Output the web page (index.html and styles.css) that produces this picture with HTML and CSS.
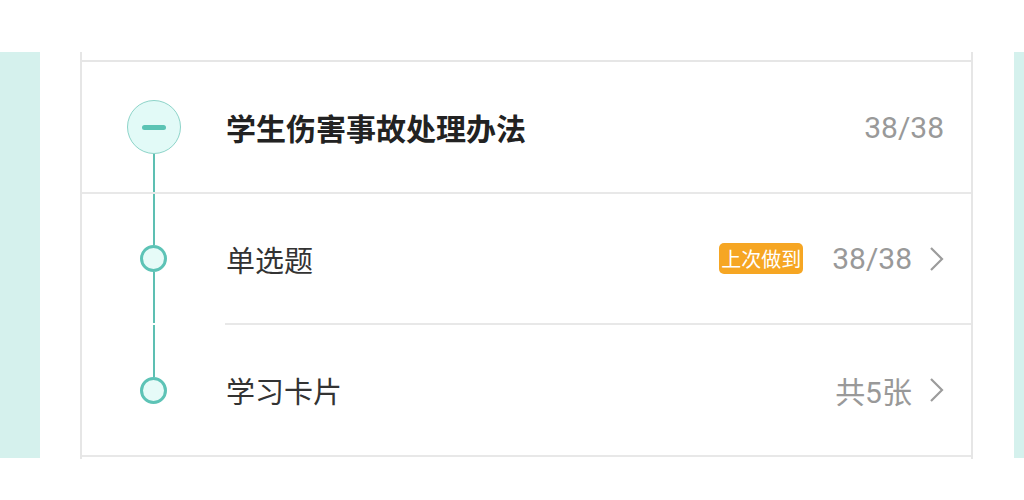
FILE: index.html
```html
<!DOCTYPE html>
<html lang="zh-CN">
<head>
<meta charset="utf-8">
<title>学生伤害事故处理办法</title>
<link rel="stylesheet" href="styles.css">
</head>
<body>
<div class="page">
  <div class="side side-left"></div>
  <div class="card">
    <div class="card-top"></div>
    <div class="row head">
      <div class="node">
        <div class="seg seg-empty"></div>
        <div class="big-dot"><span class="minus"></span></div>
        <div class="seg"></div>
      </div>
      <div class="content">
        <div class="title">学生伤害事故处理办法</div>
        <div class="meta"><span class="num">38/38</span></div>
      </div>
    </div>
    <div class="divider"></div>
    <div class="row item item-first">
      <div class="node">
        <div class="seg"></div>
        <div class="dot"></div>
        <div class="seg"></div>
      </div>
      <div class="content">
        <div class="label">单选题</div>
        <div class="meta">
          <span class="badge">上次做到</span>
          <span class="num num-mid">38/38</span>
          <svg class="chev" viewBox="0 0 15 26" width="15" height="26"><path d="M2 2 L13 13 L2 24" fill="none" stroke="#9c9c9c" stroke-width="2.2"/></svg>
        </div>
      </div>
    </div>
    <div class="divider divider-inset"></div>
    <div class="row item">
      <div class="node">
        <div class="seg"></div>
        <div class="dot"></div>
        <div class="seg seg-empty"></div>
      </div>
      <div class="content">
        <div class="label">学习卡片</div>
        <div class="meta">
          <span class="num">共5张</span>
          <svg class="chev" viewBox="0 0 15 26" width="15" height="26"><path d="M2 2 L13 13 L2 24" fill="none" stroke="#9c9c9c" stroke-width="2.2"/></svg>
        </div>
      </div>
    </div>
    <div class="divider"></div>
  </div>
  <div class="side side-right"></div>
</div>
</body>
</html>
```
FILE: styles.css
```css
html, body {
  margin: 0;
  padding: 0;
  background: #ffffff;
}
body {
  font-family: "Noto Sans CJK SC", sans-serif;
  width: 1024px;
  height: 500px;
  overflow: hidden;
}
.page {
  display: flex;
  margin-top: 52px;
  height: 407px;
}
.side {
  background: #d5f1ed;
  height: 406px;
}
.side-left {
  width: 40px;
  margin-right: 40px;
}
.side-right {
  width: 10px;
  margin-left: 41px;
}
.card {
  width: 889px;
  border-left: 2px solid #e6e6e6;
  border-right: 2px solid #e6e6e6;
  display: flex;
  flex-direction: column;
}
.card-top {
  height: 8px;
  border-bottom: 2px solid #e6e6e6;
}
.divider {
  height: 2px;
  background: #e8e8e8;
}
.divider-inset {
  margin-left: 143px;
}
.row {
  display: flex;
  height: 130px;
}
.row.item-first {
  height: 129px;
}
.node {
  width: 143px;
  display: flex;
  flex-direction: column;
  align-items: center;
  flex-shrink: 0;
}
.seg {
  flex: 1;
  width: 2px;
  background: #5dbfb2;
}
.seg-empty {
  background: transparent;
}
.big-dot {
  width: 52px;
  height: 52px;
  border-radius: 50%;
  border: 1.5px solid #8dd4c9;
  background: #e2faf7;
  display: flex;
  align-items: center;
  justify-content: center;
}
.minus {
  width: 24px;
  height: 5px;
  border-radius: 2.5px;
  background: #5bc3b4;
}
.dot {
  width: 21px;
  height: 21px;
  border-radius: 50%;
  border: 3px solid #5dc3b6;
  background: #e6fbf8;
}
.content {
  flex: 1;
  display: flex;
  align-items: center;
  justify-content: space-between;
  padding-left: 1px;
  padding-right: 27px;
}
.title {
  font-size: 30px;
  font-weight: 700;
  color: #222222;
}
.label {
  font-size: 29px;
  color: #333333;
}
.meta {
  display: flex;
  align-items: center;
}
.num {
  font-family: Roboto, "Noto Sans CJK SC", sans-serif;
  font-size: 30px;
  color: #999999;
}
.num-mid {
  margin-left: 29px;
}
.badge {
  background: #f6a623;
  color: #ffffff;
  font-size: 20px;
  line-height: 31px;
  height: 31px;
  padding: 0 2px;
  border-radius: 5px;
}
.chev {
  margin-left: 17px;
  display: block;
}
```
